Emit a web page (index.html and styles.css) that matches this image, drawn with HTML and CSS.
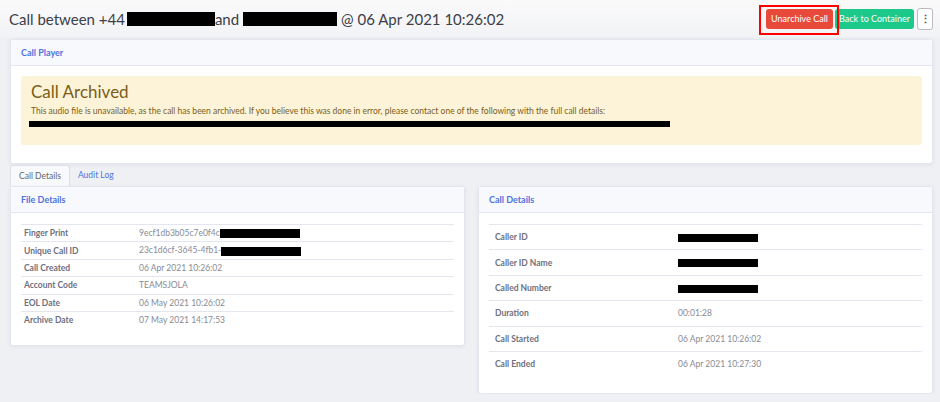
FILE: index.html
```html
<!DOCTYPE html>
<html lang="en">
<head>
    <meta charset="UTF-8">
    <title>Call Details</title>
    <link rel="stylesheet" href="styles.css">
</head>
<body>
    <div class="topbar">
        <h1 class="page-title">Call between +44<span class="redact redact-a"></span>and <span class="redact redact-b"></span> @ 06 Apr 2021 10:26:02</h1>
        <div class="actions">
            <button class="btn btn-red">Unarchive Call</button>
            <button class="btn btn-green">Back to Container</button>
            <button class="btn btn-more">&#8942;</button>
        </div>
    </div>

    <div class="page">
        <div class="card">
            <div class="card-header">Call Player</div>
            <div class="card-body player-body">
                <div class="alert">
                    <div class="alert-title">Call Archived</div>
                    <p>This audio file is unavailable, as the call has been archived. If you believe this was done in error, please contact one of the following with the full call details:</p>
                    <div class="redact redact-line"></div>
                </div>
            </div>
        </div>

        <div class="tabs">
            <span class="tab active">Call Details</span>
            <span class="tab">Audit Log</span>
        </div>

        <div class="columns">
            <div class="card">
                <div class="card-header">File Details</div>
                <div class="card-body">
                    <table class="details file-details">
                        <tr><td>Finger Print</td><td>9ecf1db3b05c7e0f4c<span class="redact redact-id"></span></td></tr>
                        <tr><td>Unique Call ID</td><td>23c1d6cf-3645-4fb1-<span class="redact redact-id"></span></td></tr>
                        <tr><td>Call Created</td><td>06 Apr 2021 10:26:02</td></tr>
                        <tr><td>Account Code</td><td>TEAMSJOLA</td></tr>
                        <tr><td>EOL Date</td><td>06 May 2021 10:26:02</td></tr>
                        <tr><td>Archive Date</td><td>07 May 2021 14:17:53</td></tr>
                    </table>
                </div>
            </div>

            <div class="card">
                <div class="card-header">Call Details</div>
                <div class="card-body">
                    <table class="details call-details">
                        <tr><td>Caller ID</td><td><span class="redact redact-num"></span></td></tr>
                        <tr><td>Caller ID Name</td><td><span class="redact redact-num"></span></td></tr>
                        <tr><td>Called Number</td><td><span class="redact redact-num"></span></td></tr>
                        <tr><td>Duration</td><td>00:01:28</td></tr>
                        <tr><td>Call Started</td><td>06 Apr 2021 10:26:02</td></tr>
                        <tr><td>Call Ended</td><td>06 Apr 2021 10:27:30</td></tr>
                    </table>
                </div>
            </div>
        </div>
    </div>
</body>
</html>
```

FILE: styles.css
```css
body {
    margin: 0;
    background: #eff0f4;
    font-family: Lato, "Noto Sans", sans-serif;
    color: #5a5c69;
}

.topbar {
    height: 37px;
    display: flex;
    align-items: center;
    justify-content: space-between;
    padding: 0 7px 0 9px;
    background: linear-gradient(#fafafb, #f2f3f6);
}

.page-title {
    margin: 0;
    font-size: 15px;
    font-weight: 400;
    color: #3d3e47;
    display: flex;
    align-items: center;
}

.redact {
    display: inline-block;
    background: #000;
}

.redact-a {
    width: 88px;
    height: 14px;
    margin-left: 2px;
}

.redact-b {
    width: 94px;
    height: 14px;
    margin: 0 4px 0 4px;
}

.actions {
    display: flex;
    align-items: center;
    gap: 2px;
}

.btn {
    font-family: inherit;
    font-size: 9px;
    color: #fff;
    border: none;
    border-radius: 3px;
    height: 20px;
    padding: 0;
    white-space: nowrap;
    cursor: pointer;
}

.btn-red {
    background: #e74a3b;
    position: relative;
    width: 67px;
}

.btn-red::after {
    content: "";
    position: absolute;
    top: -4px;
    bottom: -6px;
    left: -7px;
    right: -6px;
    border: 2px solid #f00;
}

.btn-green {
    background: #1cc88a;
    width: 79px;
}

.btn-more {
    background: #fff;
    color: #555;
    border: 1px solid #bbb;
    width: 16px;
    height: 22px;
    margin-left: 1px;
    font-size: 11px;
    font-weight: bold;
}

.page {
    padding: 2px 7px 0 10px;
}

.card {
    background: #fff;
    border: 1px solid #e3e6f0;
    border-radius: 3px;
    box-shadow: 0 1px 4px rgba(58, 59, 69, 0.08);
}

.card-header {
    height: 25px;
    line-height: 26px;
    padding-left: 10px;
    background: #f8f9fc;
    border-bottom: 1px solid #e3e6f0;
    font-size: 9px;
    font-weight: 700;
    color: #4e73df;
}

.card-body {
    padding: 11px 10px 17px;
}

.player-body {
    padding: 10px 10px 18px;
}

.alert {
    background: #fcf3d8;
    border-radius: 3px;
    padding: 6px 10px 18px;
    color: #7b5d18;
}

.alert-title {
    font-size: 17px;
    line-height: 20px;
}

.alert p {
    margin: 4px 0 5px;
    font-size: 8.5px;
}

.redact-line {
    display: block;
    width: 641px;
    height: 6px;
    margin-left: -2px;
}

.tabs {
    display: flex;
    height: 21px;
    margin-top: 1px;
}

.tab {
    font-size: 8.5px;
    line-height: 21px;
    padding: 0 8px;
    color: #4e73df;
}

.tab.active {
    color: #666;
    background: #f8f9fb;
    border: 1px solid #dde0e8;
    border-bottom: none;
    border-radius: 3px 3px 0 0;
    line-height: 20px;
}

.columns {
    display: grid;
    grid-template-columns: 455px 455px;
    justify-content: space-between;
    align-items: start;
}

.details {
    width: 100%;
    border-collapse: collapse;
    font-size: 8.5px;
}

.details td {
    border-top: 1px solid #e3e6f0;
    color: #888a96;
    padding: 0;
}

.details td:first-child {
    color: #6e707e;
    font-weight: 700;
}

.file-details td {
    height: 16.4px;
}

.file-details td:first-child {
    width: 115px;
    padding-left: 3px;
}

.call-details td {
    height: 24.4px;
}

.call-details td:first-child {
    width: 183px;
    padding-left: 6px;
}

.redact-id {
    width: 80px;
    height: 9px;
    vertical-align: middle;
}

.redact-num {
    width: 80px;
    height: 8px;
    vertical-align: middle;
}
```
